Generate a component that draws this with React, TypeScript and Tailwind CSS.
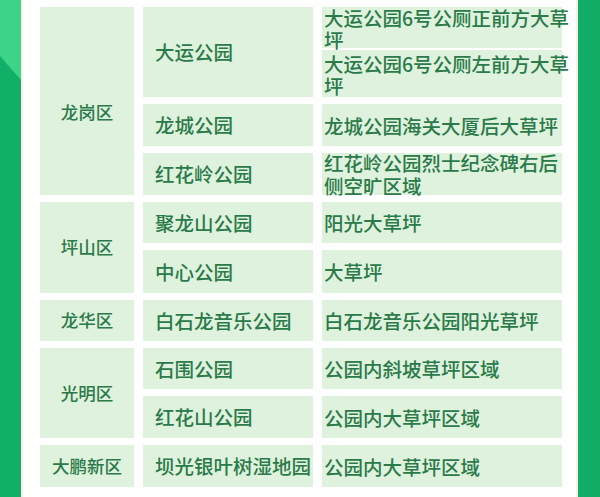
import React from "react";

type Park = { name: string; spots: string[] };
type District = { name: string; parks: Park[]; nudge?: string };

const districts: District[] = [
  {
    name: "龙岗区",
    nudge: "pt-[22px]",
    parks: [
      { name: "大运公园", spots: ["大运公园6号公厕正前方大草坪", "大运公园6号公厕左前方大草坪"] },
      { name: "龙城公园", spots: ["龙城公园海关大厦后大草坪"] },
      { name: "红花岭公园", spots: ["红花岭公园烈士纪念碑右后侧空旷区域"] },
    ],
  },
  {
    name: "坪山区",
    parks: [
      { name: "聚龙山公园", spots: ["阳光大草坪"] },
      { name: "中心公园", spots: ["大草坪"] },
    ],
  },
  {
    name: "龙华区",
    parks: [{ name: "白石龙音乐公园", spots: ["白石龙音乐公园阳光草坪"] }],
  },
  {
    name: "光明区",
    parks: [
      { name: "石围公园", spots: ["公园内斜坡草坪区域"] },
      { name: "红花山公园", spots: ["公园内大草坪区域"] },
    ],
  },
  {
    name: "大鹏新区",
    parks: [{ name: "坝光银叶树湿地园", spots: ["公园内大草坪区域"] }],
  },
];

const spanClass: Record<number, string> = {
  1: "row-span-1",
  2: "row-span-2",
  3: "row-span-3",
};

const SpotText = ({ text, tight }: { text: string; tight?: boolean }) => (
  <div className={`w-[248px] pl-[2px] text-[19.5px] ${tight ? "leading-[22px]" : "leading-[23px]"}`}>
    {text}
  </div>
);

export default function App() {
  let row = 0;

  return (
    <div className="flex h-[497px] w-[600px] overflow-hidden bg-[#12ae68] font-['Noto_Sans_CJK_SC',sans-serif] font-medium text-[#2b7a49]">
      {/* left ribbon */}
      <div className="h-full w-[21px] shrink-0">
        <svg width="21" height="497" viewBox="0 0 21 497" className="block">
          <rect width="21" height="497" fill="#10b069" />
          <polygon points="0,0 21,0 21,80 0,56" fill="#3dd487" />
        </svg>
      </div>

      {/* white sheet */}
      <div className="h-full w-[557px] shrink-0 border-x-[2px] border-x-[#fbefe8] bg-[#fefffe] pl-[17px] pt-[7px]">
        <div className="grid grid-cols-[94px_170px_240px] grid-rows-[90px_42px_42px_41px_43px_41px_41px_42px_42px] gap-x-[9px] gap-y-[7px]">
          {districts.map((d) => {
            const start = row;
            row += d.parks.length;
            return (
              <React.Fragment key={d.name}>
                <div
                  className={`${spanClass[d.parks.length]} col-start-1 flex items-center justify-center bg-[#def2dd] text-[17.5px] ${d.nudge ?? ""}`}
                  style={{ gridRowStart: start + 1 }}
                >
                  {d.name}
                </div>
                {d.parks.map((p, i) => (
                  <React.Fragment key={p.name}>
                    <div
                      className="col-start-2 flex items-center bg-[#def2dd] pl-[12px] text-[19.5px] whitespace-nowrap"
                      style={{ gridRowStart: start + i + 1 }}
                    >
                      {p.name}
                    </div>
                    {p.spots.length > 1 ? (
                      <div
                        className="col-start-3 flex flex-col gap-[2px]"
                        style={{ gridRowStart: start + i + 1 }}
                      >
                        <div className="h-[41px] bg-[#def2dd]">
                          <SpotText text={p.spots[0]} tight />
                        </div>
                        <div className="flex-1 bg-[#def2dd] pt-[3px]">
                          <SpotText text={p.spots[1]} tight />
                        </div>
                      </div>
                    ) : (
                      <div
                        className="col-start-3 flex items-center bg-[#def2dd]"
                        style={{ gridRowStart: start + i + 1 }}
                      >
                        <SpotText text={p.spots[0]} />
                      </div>
                    )}
                  </React.Fragment>
                ))}
              </React.Fragment>
            );
          })}
        </div>
      </div>

      {/* right ribbon */}
      <div className="h-full flex-1 bg-[#12ae68]" />
    </div>
  );
}
